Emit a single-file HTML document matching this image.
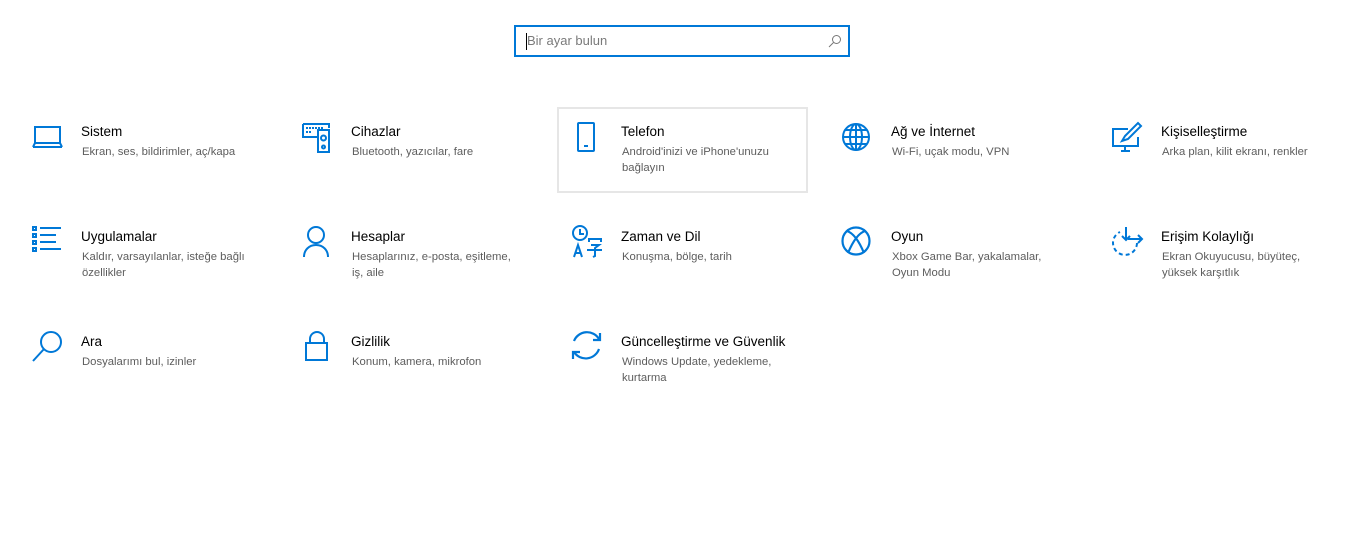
<!DOCTYPE html>
<html><head><meta charset="utf-8"><style>
body{margin:0;width:1349px;height:539px;background:#fff;font-family:"Liberation Sans",sans-serif;position:relative;overflow:hidden}
.search{position:absolute;left:514px;top:25px;width:332px;height:28px;border:2px solid #0078d7;}
.search span{position:absolute;left:11px;top:6px;font-size:13px;color:#7a7a7a}
.search i{position:absolute;left:10px;top:6px;width:1px;height:17px;background:#000}
.search svg{position:absolute;right:6px;top:7px}
.item{position:absolute;width:250px}
.item svg{position:absolute;left:0;top:0;overflow:visible}
.t{position:absolute;left:49px;top:0px;font-size:13.5px;color:#000;white-space:nowrap}
.s{position:absolute;left:50px;top:20px;font-size:11.3px;color:#5d5d5d;line-height:16px;width:172px}
.hl{position:absolute;left:557px;top:107px;width:247px;height:82px;border:2px solid #e6e6e6}
</style></head><body>
<div class="search"><i></i><span>Bir ayar bulun</span>
<svg width="14" height="14" viewBox="0 0 14 14" fill="none" stroke="#777" stroke-width="1"><circle cx="8.5" cy="5.5" r="4"/><path d="M5.5 8.5L1 13"/></svg></div>
<div class="hl"></div>

<div class="item" style="left:32px;top:124px"><svg width="32" height="28" viewBox="0 0 32 28" fill="none" stroke="#0078d7" stroke-width="2"><rect x="3" y="3" width="25" height="16"/><path d="M1 23h29"/><path d="M3 19l-2 4M28 19l2 4"/></svg>
<div class="t">Sistem</div><div class="s">Ekran, ses, bildirimler, aç/kapa</div></div>

<div class="item" style="left:302px;top:124px"><svg width="32" height="32" viewBox="0 0 32 32" fill="none" stroke="#0078d7" stroke-width="2"><path d="M1 0h26v4M1 0v13h14"/><path d="M4 4h18M4 8h6" stroke-dasharray="2 1"/><rect x="16" y="6" width="11" height="22"/><circle cx="21.5" cy="14" r="2.5"/><circle cx="21.5" cy="23" r="1.5"/></svg>
<div class="t">Cihazlar</div><div class="s">Bluetooth, yazıcılar, fare</div></div>

<div class="item" style="left:572px;top:124px"><svg width="32" height="32" viewBox="0 0 32 32" fill="none" stroke="#0078d7" stroke-width="2"><rect x="6" y="-1" width="16" height="28" rx="1"/><path d="M12 22h4"/></svg>
<div class="t">Telefon</div><div class="s">Android'inizi ve iPhone'unuzu bağlayın</div></div>

<div class="item" style="left:842px;top:124px"><svg width="32" height="32" viewBox="0 0 32 32" fill="none" stroke="#0078d7" stroke-width="2"><circle cx="14" cy="13" r="13"/><ellipse cx="14" cy="13" rx="6" ry="13"/><path d="M1 13h26M3 6h22M3 20h22M14 0v26"/></svg>
<div class="t">Ağ ve İnternet</div><div class="s">Wi-Fi, uçak modu, VPN</div></div>

<div class="item" style="left:1112px;top:124px"><svg width="32" height="32" viewBox="0 0 32 32" fill="none" stroke="#0078d7" stroke-width="2"><path d="M16 5H1v17h25v-9"/><path d="M13 22v5M9 27h9"/><path d="M10 17l3-5L26 -1l3 3L16 15z"/></svg>
<div class="t">Kişiselleştirme</div><div class="s">Arka plan, kilit ekranı, renkler</div></div>

<div class="item" style="left:32px;top:229px"><svg width="32" height="32" viewBox="0 0 32 32" fill="none" stroke="#0078d7" stroke-width="2"><rect x="1" y="-2" width="3" height="3"/><rect x="1" y="5" width="3" height="3"/><rect x="1" y="12" width="3" height="3"/><rect x="1" y="19" width="3" height="3"/><path d="M8 -1h21M8 6h16M8 13h16M8 20h21"/></svg>
<div class="t">Uygulamalar</div><div class="s">Kaldır, varsayılanlar, isteğe bağlı özellikler</div></div>

<div class="item" style="left:302px;top:229px"><svg width="32" height="32" viewBox="0 0 32 32" fill="none" stroke="#0078d7" stroke-width="2"><circle cx="14" cy="6" r="8"/><path d="M2 28c0-7 5-12 12-12s12 5 12 12"/></svg>
<div class="t">Hesaplar</div><div class="s">Hesaplarınız, e-posta, eşitleme, iş, aile</div></div>

<div class="item" style="left:572px;top:229px"><svg width="32" height="32" viewBox="0 0 32 32" fill="none" stroke="#0078d7" stroke-width="2"><circle cx="8" cy="4" r="7"/><path d="M8 0v5h4"/><path d="M2 28l4-12 4 12M3 24h6"/><path d="M16 10h14M17 10v3M29 10v3M19 16h8l-4 3v8l-2 1M15 21h15"/></svg>
<div class="t">Zaman ve Dil</div><div class="s">Konuşma, bölge, tarih</div></div>

<div class="item" style="left:842px;top:229px"><svg width="32" height="32" viewBox="0 0 32 32" fill="none" stroke="#0078d7" stroke-width="2.2"><circle cx="14" cy="12" r="13.5"/><path d="M5 2c6 2 12 10 17 22M23 2c-6 2-12 10-17 22"/></svg>
<div class="t">Oyun</div><div class="s">Xbox Game Bar, yakalamalar, Oyun Modu</div></div>

<div class="item" style="left:1112px;top:229px"><svg width="32" height="32" viewBox="0 0 32 32" fill="none" stroke="#0078d7" stroke-width="2"><path d="M25 14a12 12 0 1 1-17-11" stroke-dasharray="4 3"/><path d="M14 -2v13M10 7l4 4 4-4M16 10h14M26 6l4 4-4 4"/></svg>
<div class="t">Erişim Kolaylığı</div><div class="s">Ekran Okuyucusu, büyüteç, yüksek karşıtlık</div></div>

<div class="item" style="left:32px;top:334px"><svg width="32" height="32" viewBox="0 0 32 32" fill="none" stroke="#0078d7" stroke-width="2"><circle cx="19" cy="8" r="10"/><path d="M12 15L1 27"/></svg>
<div class="t">Ara</div><div class="s">Dosyalarımı bul, izinler</div></div>

<div class="item" style="left:302px;top:334px"><svg width="32" height="32" viewBox="0 0 32 32" fill="none" stroke="#0078d7" stroke-width="2"><path d="M8 9V5a7 7 0 0 1 14 0v4"/><rect x="4" y="9" width="21" height="17"/></svg>
<div class="t">Gizlilik</div><div class="s">Konum, kamera, mikrofon</div></div>

<div class="item" style="left:572px;top:334px"><svg width="32" height="32" viewBox="0 0 32 32" fill="none" stroke="#0078d7" stroke-width="2.2"><path d="M2 7A14 14 0 0 1 27 5"/><path d="M28 -1v7h-7"/><path d="M27 15A14 14 0 0 1 2 18"/><path d="M1 25v-7h7"/></svg>
<div class="t">Güncelleştirme ve Güvenlik</div><div class="s">Windows Update, yedekleme, kurtarma</div></div>
</body></html>
